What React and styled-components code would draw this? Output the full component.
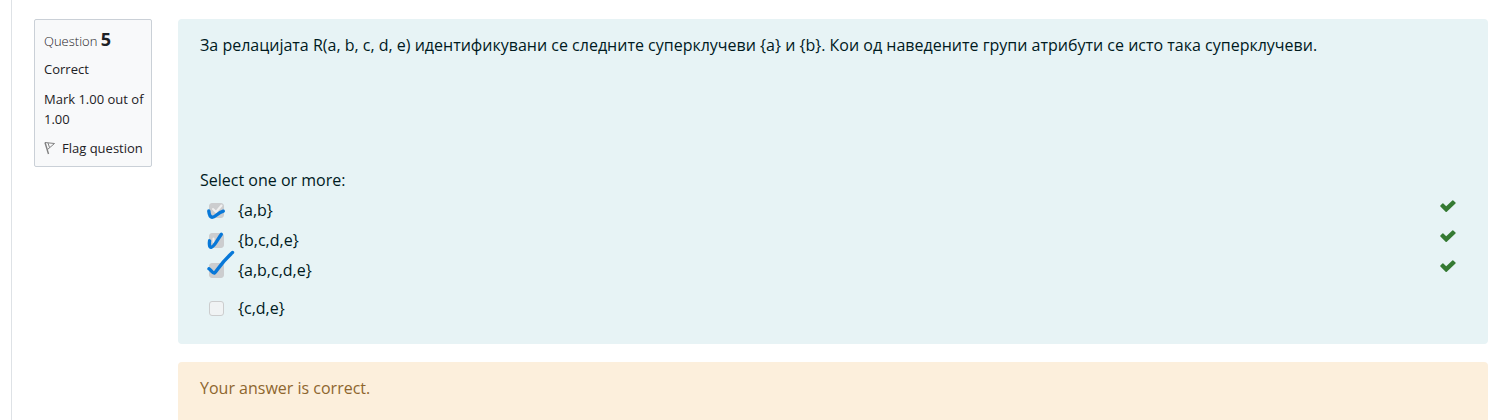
import React from "react";
import styled, { createGlobalStyle } from "styled-components";

const GlobalStyle = createGlobalStyle`
  *, *::before, *::after { box-sizing: border-box; }
  body {
    margin: 0;
    background: #fff;
    color: #1d2125;
    font: 16px/24px "Segoe UI", "Open Sans", "Noto Sans", sans-serif;
  }
`;

const Page = styled.main`
  display: flex;
  align-items: stretch;
  min-height: 100vh;
  margin-left: 11px;
  padding: 19px 10px 0 22px;
  border-left: 1px solid #dee2e6;
`;

const Info = styled.aside`
  flex: none;
  align-self: flex-start;
  width: 118px;
  margin-right: 26px;
  padding: 8px 4px 8px 9px;
  border: 1px solid #cad0d7;
  border-radius: 2px;
  background: #f8f9fa;
  font-size: 13px;
  line-height: 20px;
`;

const Number = styled.h3`
  margin: 0 0 7px;
  font-size: 13px;
  line-height: 22px;
  font-weight: 300;

  strong {
    font-size: 18px;
    font-weight: 700;
  }
`;

const InfoLine = styled.div`
  margin-bottom: ${(p) => (p.$last ? 9 : 10)}px;
`;

const FlagLink = styled.a`
  display: flex;
  align-items: center;
  gap: 6px;
  color: inherit;
  text-decoration: none;
  white-space: nowrap;
`;

const Content = styled.div`
  flex: 1;
  min-width: 0;
  display: flex;
  flex-direction: column;
  gap: 18px;
`;

const Formulation = styled.form`
  padding: 14px 22px 24px;
  border-radius: 4px;
  background: #e7f3f5;
  color: #001a1e;
`;

const QuestionText = styled.p`
  margin: 0 0 111px;
`;

const Answers = styled.fieldset`
  margin: 0;
  padding: 0;
  border: 0;
`;

const Prompt = styled.legend`
  padding: 0;
`;

const Row = styled.div`
  display: flex;
  align-items: center;
  height: 24px;
  margin-top: ${(p) => (p.$spaced ? 14 : 6)}px;
  padding: 0 10px 0 9px;
`;

const Tick = styled.span`
  position: relative;
  display: flex;
  width: 15px;
  height: 15px;
  margin-right: 14px;
`;

const Checkbox = styled.input`
  appearance: none;
  width: 15px;
  height: 15px;
  margin: 0;
  border: 1px solid #cccdce;
  border-radius: 3px;
  background: #f0f3f4;

  &:checked {
    border-color: #cccdcf;
    background: #cccdcf;
  }
`;

const Ink = styled.svg`
  position: absolute;
  left: -5px;
  top: -14px;
  width: 32px;
  height: 32px;
  overflow: visible;
  pointer-events: none;
`;

const Valid = styled.svg`
  width: 16px;
  height: 12px;
  margin: 0 0 8px auto;
`;

const Feedback = styled.section`
  flex: 1;
  padding: 14px 22px 0;
  border-radius: 4px 4px 0 0;
  background: #fcefdc;
  color: #8e662e;
`;

const options = [
  {
    id: "a",
    label: "{a,b}",
    under: "M9 20L12 23L17.5 16.5",
    ink: "M4.8 22C5 24 6 28 8 28.2C11 28.5 13.5 24 19.3 22.2",
  },
  {
    id: "b",
    label: "{b,c,d,e}",
    under: "M9.5 19.5L9.5 23",
    ink: "M5.6 21.8C5.2 24 5.2 28.5 7.2 28.3C11 27.5 14 19 17.3 15.3",
  },
  {
    id: "c",
    label: "{a,b,c,d,e}",
    ink: "M5 19.8C7 20.8 8.5 24.5 10.5 24C13 22 15 16 28.5 3.5",
  },
  { id: "d", label: "{c,d,e}" },
];

export default function App() {
  return (
    <>
      <GlobalStyle />
      <Page>
        <Info>
          <Number>
            Question <strong>5</strong>
          </Number>
          <InfoLine>Correct</InfoLine>
          <InfoLine $last>Mark 1.00 out of 1.00</InfoLine>
          <FlagLink href="#flag">
            <svg width="12" height="14" viewBox="0 0 12 14" fill="none" stroke="#808080" aria-hidden="true">
              <path d="M1 1.5L4.5 13" strokeWidth="1.4" />
              <path d="M1 1.5L10.5 2.5L3.5 8.5M4 2L5.5 6.5" />
            </svg>
            Flag question
          </FlagLink>
        </Info>
        <Content>
          <Formulation>
            <QuestionText>
              За релацијата R(a, b, c, d, e) идентификувани се следните суперклучеви {"{a}"} и {"{b}"}. Кои од
              наведените групи атрибути се исто така суперклучеви.
            </QuestionText>
            <Answers>
              <Prompt>Select one or more:</Prompt>
              {options.map((o) => (
                <Row key={o.id} $spaced={!o.ink}>
                  <Tick>
                    <Checkbox type="checkbox" id={o.id} defaultChecked={!!o.ink} />
                    {o.ink && (
                      <Ink viewBox="0 0 32 32" fill="none" strokeLinecap="round" strokeLinejoin="round" aria-hidden="true">
                        {o.under && <path d={o.under} stroke="#f0f0f0" strokeWidth="2" />}
                        <path d={o.ink} stroke="#0878d8" strokeWidth="3.4" />
                      </Ink>
                    )}
                  </Tick>
                  <label htmlFor={o.id}>{o.label}</label>
                  {o.ink && (
                    <Valid viewBox="0 0 16 12" role="img" aria-label="Correct">
                      <path
                        d="M0.4 5.6L2.4 3.5Q2.9 3.2 3.4 3.6L6.2 6.3L12.3 0.4Q12.8 0 13.3 0.4L15.5 2.5Q15.9 3 15.5 3.5L6.8 11.7Q6.2 12.2 5.6 11.7L0.4 6.6Q0 6.1 0.4 5.6Z"
                        fill="#357a32"
                      />
                    </Valid>
                  )}
                </Row>
              ))}
            </Answers>
          </Formulation>
          <Feedback>Your answer is correct.</Feedback>
        </Content>
      </Page>
    </>
  );
}
